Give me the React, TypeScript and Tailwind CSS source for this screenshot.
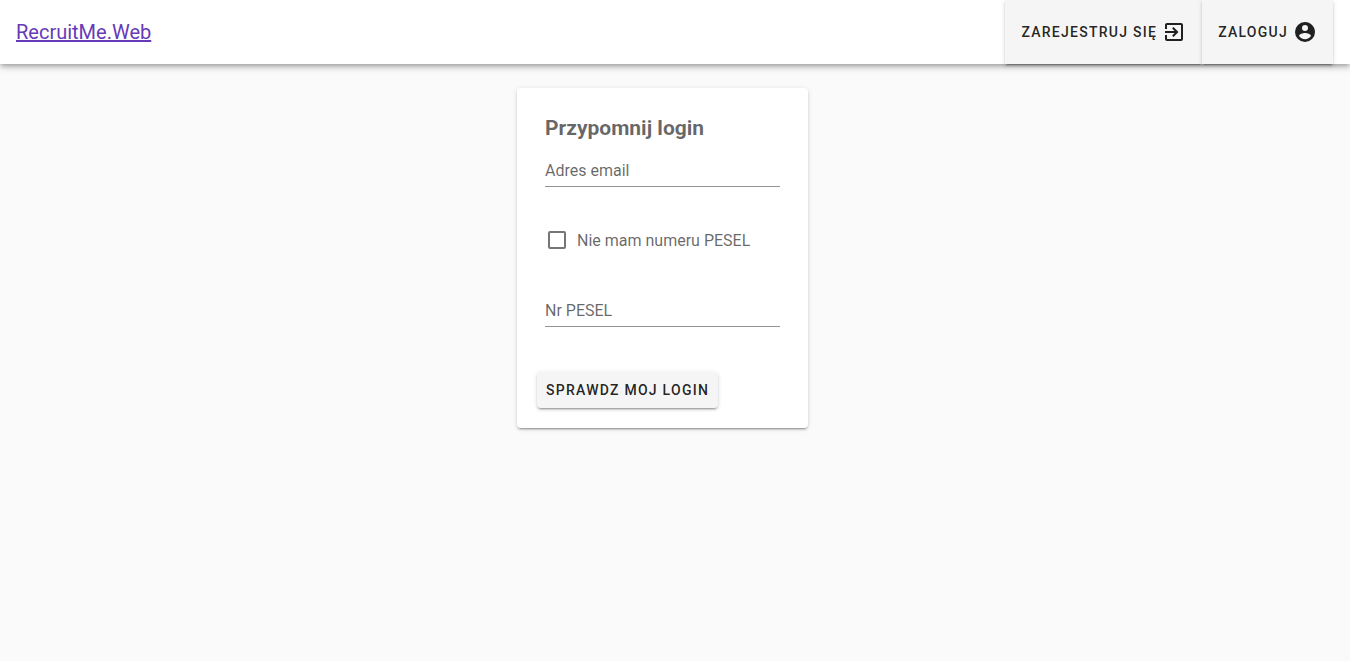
import { useId, useState } from "react";
import type { ReactNode } from "react";

const elevation2 =
  "shadow-[0_3px_1px_-2px_rgba(0,0,0,0.2),0_2px_2px_0_rgba(0,0,0,0.14),0_1px_5px_0_rgba(0,0,0,0.12)]";

const buttonText = "text-sm font-medium uppercase tracking-[0.09em] text-black/87";

function Icon({ path }: { path: string }) {
  return (
    <svg viewBox="0 0 24 24" className="size-6 shrink-0 fill-current" aria-hidden="true">
      <path d={path} />
    </svg>
  );
}

function BarButton({ children, icon }: { children: ReactNode; icon: string }) {
  return (
    <button
      type="button"
      className={`flex h-full cursor-pointer items-center gap-[5px] bg-[#f5f5f5] px-4 ${buttonText} ${elevation2}`}
    >
      {children}
      <Icon path={icon} />
    </button>
  );
}

function TextField({ label, type = "text" }: { label: string; type?: string }) {
  const id = useId();
  return (
    <div className="relative">
      <input
        id={id}
        type={type}
        placeholder=" "
        className="peer block h-[33px] w-full border-b border-black/42 bg-transparent text-base text-black/87 outline-none focus:border-[#1976d2]"
      />
      <label
        htmlFor={id}
        className="pointer-events-none absolute top-[5px] left-0 hidden text-base text-black/60 peer-placeholder-shown:block peer-focus:hidden"
      >
        {label}
      </label>
    </div>
  );
}

const exitToApp =
  "M19,3H5C3.89,3 3,3.89 3,5V9H5V5H19V19H5V15H3V19A2,2 0 0,0 5,21H19A2,2 0 0,0 21,19V5C21,3.89 20.1,3 19,3M10.08,15.58L11.5,17L16.5,12L11.5,7L10.08,8.41L12.67,11H3V13H12.67L10.08,15.58Z";
const accountCircle =
  "M12,19.2C9.5,19.2 7.29,17.92 6,16C6.03,14 10,12.9 12,12.9C14,12.9 17.97,14 18,16C16.71,17.92 14.5,19.2 12,19.2M12,5A3,3 0 0,1 15,8A3,3 0 0,1 12,11A3,3 0 0,1 9,8A3,3 0 0,1 12,5M12,2A10,10 0 0,0 2,12A10,10 0 0,0 12,22A10,10 0 0,0 22,12C22,6.47 17.5,2 12,2Z";

export default function App() {
  const [noPesel, setNoPesel] = useState(false);

  return (
    <div className="flex min-h-screen flex-col bg-[#fafafa] font-[Roboto,sans-serif] text-black/87">
      <header className="flex h-16 items-center justify-between bg-white pr-[17px] pl-4 shadow-[0_2px_4px_-1px_rgba(0,0,0,0.2),0_4px_5px_0_rgba(0,0,0,0.14),0_1px_10px_0_rgba(0,0,0,0.12)]">
        <a href="#" className="text-xl text-[#673ab7] underline">
          RecruitMe.Web
        </a>
        <nav className="flex h-full">
          <BarButton icon={exitToApp}>Zarejestruj się</BarButton>
          <BarButton icon={accountCircle}>Zaloguj</BarButton>
        </nav>
      </header>

      <main className="flex justify-center pt-6 pr-[25px]">
        <form
          onSubmit={(e) => e.preventDefault()}
          className={`w-full max-w-[291px] rounded bg-white px-5 pt-6 pb-5 ${elevation2}`}
        >
          <div className="px-2">
            <h1 className="mb-2.5 text-[21px] leading-8 font-bold text-black/60">Przypomnij login</h1>
            <TextField label="Adres email" type="email" />
            <label className="mt-[41px] mb-10 flex cursor-pointer items-start gap-2 text-base leading-[26px] text-black/60">
              <span className="flex size-6 items-center justify-center">
                <input
                  type="checkbox"
                  checked={noPesel}
                  onChange={(e) => setNoPesel(e.target.checked)}
                  className="size-[18px] cursor-pointer appearance-none rounded-xs border-2 border-black/54 checked:border-[#1976d2] checked:bg-[#1976d2]"
                />
              </span>
              Nie mam numeru PESEL
            </label>
            <TextField label="Nr PESEL" />
          </div>
          <button
            type="submit"
            className={`mt-[45px] h-9 cursor-pointer rounded bg-[#f5f5f5] px-[9px] ${buttonText} ${elevation2}`}
          >
            Sprawdz moj login
          </button>
        </form>
      </main>
    </div>
  );
}
